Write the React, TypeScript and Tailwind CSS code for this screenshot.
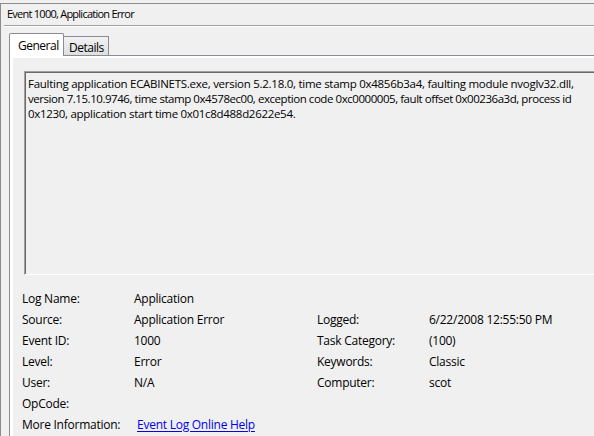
import React from "react";

const F = { fontFamily: '"Segoe UI", "Open Sans", "Liberation Sans", sans-serif' };

function Row({ label, value, link }: { label: string; value?: string; link?: boolean }) {
  return (
    <div className="flex h-[21px] items-center">
      <div className="w-[112px] shrink-0">{label}</div>
      {link ? (
        <a className="ml-[3px] text-[#0000ee] underline underline-offset-[2px] cursor-pointer">{value}</a>
      ) : (
        <div>{value}</div>
      )}
    </div>
  );
}

export default function App() {
  return (
    <div
      className="w-[594px] h-[436px] bg-[#f0f0f0] overflow-hidden text-[12px] text-black antialiased"
      style={F}
    >
      <div className="mt-[3px] h-[433px] border-t border-l border-[#8c8c8c] flex flex-col">
        <div className="h-[21px] pl-[6px] flex items-center text-[11px] tracking-[-0.75px]">Event 1000, Application Error</div>
        <div className="ml-[3px] h-px bg-[#a0a0a0]" />
        <div className="ml-[3px] h-px bg-white" />
        <div className="pl-[8px] pt-[6px] flex-1 flex flex-col">
          <div className="flex items-end h-[23px] tracking-[-0.5px]">
            <div className="w-[55px] h-[23px] bg-white border-t border-l border-r border-[#898c95] rounded-t-[2px] flex items-start pt-[3px] pl-[8px] relative z-10">
              General
            </div>
            <div className="w-[45px] h-[20px] border-t border-r border-[#898c95] bg-gradient-to-b from-[#f2f2f2] to-[#dedede] flex items-start pt-[2px] pl-[5px]">
              Details
            </div>
          </div>
          <div className="flex-1 border-l border-t border-[#898c95] -mt-px">
            <div className="h-full border-l-[3px] border-t-2 border-white bg-[#f0f0f0] flex flex-col">
              <div className="ml-[11px] mt-[13px] h-[204px] border-t border-l border-[#a0a0a0] border-b border-b-white">
                <div className="h-full border-t border-l border-[#696969] pl-[2px] pt-[3px] leading-[15px] whitespace-nowrap text-[11.5px]">
                  <div className="tracking-[-0.27px]">Faulting application ECABINETS.exe, version 5.2.18.0, time stamp 0x4856b3a4, faulting module nvoglv32.dll,</div>
                  <div className="tracking-[-0.45px]">version 7.15.10.9746, time stamp 0x4578ec00, exception code 0xc0000005, fault offset 0x00236a3d, process id</div>
                  <div className="tracking-[-0.3px]">0x1230, application start time 0x01c8d488d2622e54.</div>
                </div>
              </div>
              <div className="ml-[9px] mt-[13px] flex tracking-[-0.25px]">
                <div className="w-[295px]">
                  <Row label="Log Name:" value="Application" />
                  <Row label="Source:" value="Application Error" />
                  <Row label="Event ID:" value="1000" />
                  <Row label="Level:" value="Error" />
                  <Row label="User:" value="N/A" />
                  <Row label="OpCode:" />
                  <Row label="More Information:" value="Event Log Online Help" link />
                </div>
                <div>
                  <div className="h-[21px]" />
                  <Row label="Logged:" value="6/22/2008 12:55:50 PM" />
                  <Row label="Task Category:" value="(100)" />
                  <Row label="Keywords:" value="Classic" />
                  <Row label="Computer:" value="scot" />
                </div>
              </div>
            </div>
          </div>
        </div>
      </div>
    </div>
  );
}
